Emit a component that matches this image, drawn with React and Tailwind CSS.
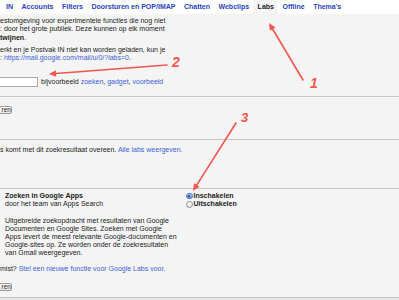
import React from "react"

const Tab = ({ label, active, className = "" }) => (
  <div className={`px-[4.25px] h-full flex items-center ${active ? "bg-[#f4f4f4] text-[#222]" : "text-[#2a44c0]"} ${className}`}>
    {label}
  </div>
)

const Btn = ({ label }) => (
  <div className="h-[8.5px] w-[13px] ml-[-1px] border border-[#9a9a9a] rounded-[2px] bg-gradient-to-b from-white to-[#e8e8e8] flex items-center pl-[1.5px] text-[6.5px] leading-none">
    {label}
  </div>
)

const Radio = ({ checked }) =>
  checked ? (
    <div className="size-[6.5px] rounded-full border border-[#4d76c4] bg-gradient-to-b from-[#b9d2f5] to-[#5f8fdc] flex items-center justify-center">
      <div className="size-[2px] rounded-full bg-[#1a2a50]" />
    </div>
  ) : (
    <div className="size-[6.5px] rounded-full border border-[#8e8e8e] bg-gradient-to-b from-white to-[#e4e4e4]" />
  )

export default function App() {
  const link = "text-[#3d5fd4]"

  return (
    <div className="relative w-[399px] h-[300px] overflow-hidden bg-[#f4f4f4] text-[#222] text-[7px] leading-[8.5px]" style={{ fontFamily: '"Liberation Sans", Arial, sans-serif' }}>
      <div className="h-[14px] bg-white flex font-bold whitespace-nowrap">
        <Tab label="IN" className="pl-[6px]" />
        <Tab label="Accounts" />
        <Tab label="Filters" />
        <Tab label="Doorsturen en POP/IMAP" />
        <Tab label="Chatten" />
        <Tab label="Webclips" />
        <Tab label="Labs" active />
        <Tab label="Offline" />
        <Tab label="Thema's" />
      </div>

      <div className="mt-[2.5px] whitespace-nowrap">
        <div>estomgeving voor experimentele functies die nog niet</div>
        <div>: door het grote publiek. Deze kunnen op elk moment</div>
        <div><b>twijnen</b>.</div>
      </div>

      <div className="mt-[3.8px] whitespace-nowrap">
        <div>erkt en je Postvak IN niet kan worden geladen, kun je</div>
        <div>: <span className={link}>https://mail.google.com/mail/u/0/?labs=0</span>.</div>
      </div>

      <div className="mt-[14.7px] flex items-center whitespace-nowrap">
        <div className="w-[39px] h-[9.5px] ml-[-1px] border border-[#a9a9a9] bg-white" />
        <div className="ml-[3px]">
          bijvoorbeeld <span className={link}>zoeken</span>, <span className={link}>gadget</span>, <span className={link}>voorbeeld</span>
        </div>
      </div>

      <div className="mt-[9px] border-t border-[#c9c9c9]" />
      <div className="mt-[9px]"><Btn label="ren" /></div>

      <div className="mt-[24.5px] border-t border-[#c9c9c9]" />
      <div className="mt-[5.75px] whitespace-nowrap">
        s komt met dit zoekresultaat overeen. <span className={link}>Alle labs weergeven.</span>
      </div>

      <div className="mt-[33.75px] border-t border-[#c9c9c9]" />
      <div className="flex">
        <div className="w-[186px] pl-[5px] pt-[2.75px] whitespace-nowrap">
          <div className="font-bold">Zoeken in Google Apps</div>
          <div>door het team van Apps Search</div>
          <div className="mt-[8px] leading-[8px]">
            <div>Uitgebreide zoekopdracht met resultaten van Google</div>
            <div>Documenten en Google Sites. Zoeken met Google</div>
            <div>Apps levert de meest relevante Google-documenten en</div>
            <div>Google-sites op. Ze worden onder de zoekresultaten</div>
            <div>van Gmail weergegeven.</div>
          </div>
        </div>
        <div className="pt-[3px] font-bold whitespace-nowrap">
          <div className="flex items-center gap-[1px] h-[8.5px]"><Radio checked />Inschakelen</div>
          <div className="flex items-center gap-[1px] h-[8.5px]"><Radio />Uitschakelen</div>
        </div>
      </div>

      <div className="mt-[8px] whitespace-nowrap">
        mist? <span className={link}>Stel een nieuwe functie voor Google Labs voor.</span>
      </div>
      <div className="mt-[9.75px]"><Btn label="ren" /></div>
      <div className="mt-[5.5px] h-[10px] border-t border-[#c4c4c4] bg-[#e9e9e9]" />

      <svg className="absolute inset-0 pointer-events-none" width="399" height="300" viewBox="0 0 399 300">
        <g stroke="#f0564c" strokeWidth="1.6" strokeLinecap="round" fill="none">
          <line x1="303" y1="80" x2="272.6" y2="29" />
          <line x1="167" y1="65" x2="56" y2="73.5" />
          <line x1="236" y1="123" x2="196.7" y2="185.1" />
        </g>
        <g fill="#f0564c">
          <polygon points="269,23 275.4,27.4 269.9,30.7" />
          <polygon points="49,74 55.8,70.2 56.2,76.8" />
          <polygon points="193,191 199.5,186.8 194,183.3" />
        </g>
      </svg>

      <div className="absolute left-[310px] top-[76px] text-[14px] leading-none font-bold italic text-[#f0564c]">1</div>
      <div className="absolute left-[172px] top-[55px] text-[14px] leading-none font-bold italic text-[#f0564c]">2</div>
      <div className="absolute left-[241px] top-[111px] text-[13px] leading-none font-bold italic text-[#f0564c]">3</div>
    </div>
  )
}
